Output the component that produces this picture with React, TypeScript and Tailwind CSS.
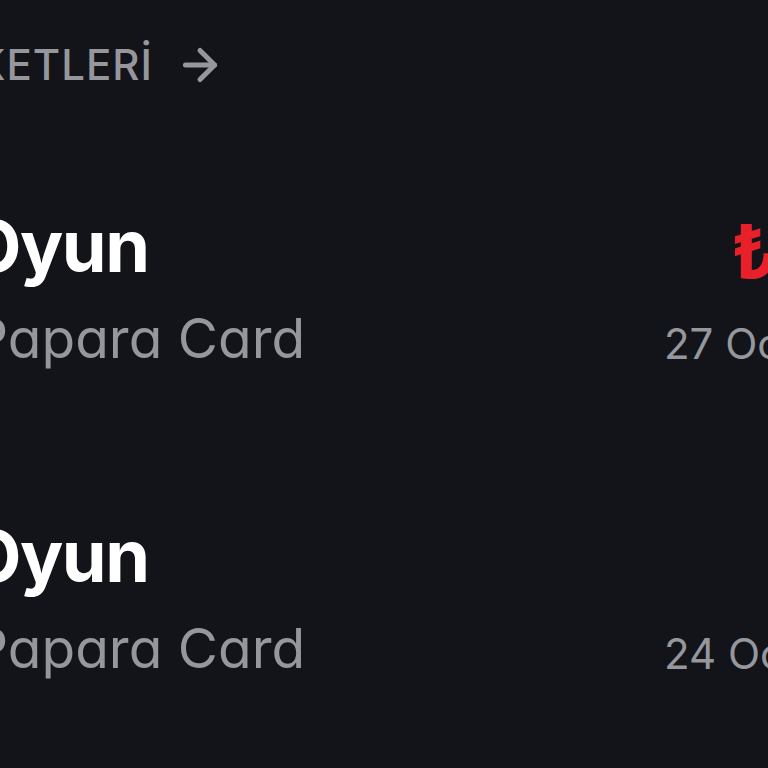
import { ArrowRight } from 'lucide-react';

type Txn = {
  title: string;
  card: string;
  amount: string;
  date: string;
};

const txns: Txn[] = [
  { title: 'Oyun', card: 'Papara Card', amount: '₺149,99', date: '27 Oca 2024' },
  { title: 'Oyun', card: 'Papara Card', amount: '₺', date: '24 Oca 2024' },
];

function TxnRow({ txn, showAmount }: { txn: Txn; showAmount: boolean }) {
  return (
    <div className="flex h-[310px] items-start">
      <div className="-ml-[34px] flex w-[340px] shrink-0 flex-col">
        <span className="whitespace-nowrap text-[72px] leading-[88px] font-bold tracking-[-1.5px] text-white">
          {txn.title}
        </span>
        <span className="mt-[14px] ml-[7px] whitespace-nowrap text-[55px] leading-[68px] font-normal text-[#96979c]">
          {txn.card}
        </span>
      </div>
      <div className="ml-[358px] flex shrink-0 flex-col items-start">
        <span
          className={
            'ml-[67px] pt-[5px] whitespace-nowrap text-[74px] leading-[88px] font-bold text-[#e8202a] ' +
            (showAmount ? '' : 'invisible')
          }
        >
          {txn.amount}
        </span>
        <span className="mt-[21px] whitespace-nowrap text-[42px] leading-[56px] text-[#96979c]">
          {txn.date}
        </span>
      </div>
    </div>
  );
}

export default function App() {
  return (
    <div
      className="h-[768px] w-[768px] overflow-hidden bg-[#131419] [font-feature-settings:'cv11'] antialiased"
      style={{ fontFamily: 'Inter, "Noto Sans", sans-serif' }}
    >
      <div className="flex items-center gap-[22px] pt-[38px] -ml-[141px]">
        <span className="whitespace-nowrap text-[42px] leading-[54px] font-medium tracking-[1px] text-[#96979c]">
          HAREKETLERİ
        </span>
        <ArrowRight size={50} strokeWidth={2.4} className="text-[#96979c]" />
      </div>
      <div className="mt-[110px] flex flex-col">
        {txns.map((t, i) => (
          <TxnRow key={i} txn={t} showAmount={i === 0} />
        ))}
      </div>
    </div>
  );
}
